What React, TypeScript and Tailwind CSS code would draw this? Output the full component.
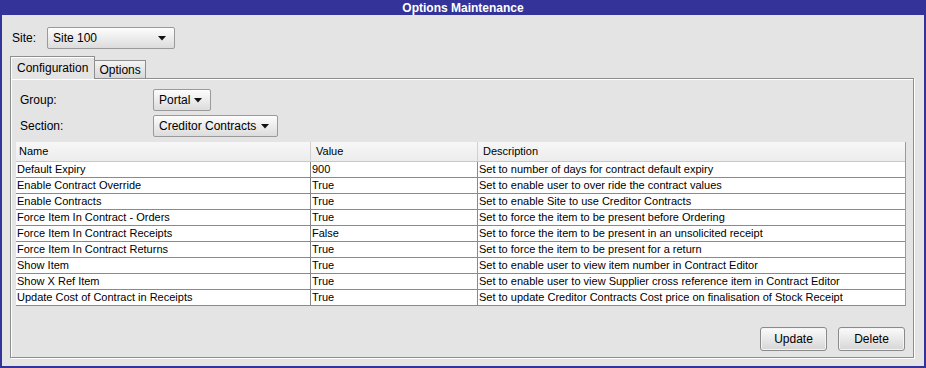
import React from "react";

type Row = { name: string; value: string; description: string };

const rows: Row[] = [
  { name: "Default Expiry", value: "900", description: "Set to number of days for contract default expiry" },
  { name: "Enable Contract Override", value: "True", description: "Set to enable user to over ride the contract values" },
  { name: "Enable Contracts", value: "True", description: "Set to enable Site to use Creditor Contracts" },
  { name: "Force Item In Contract - Orders", value: "True", description: "Set to force the item to be present before Ordering" },
  { name: "Force Item In Contract Receipts", value: "False", description: "Set to force the item to be present in an unsolicited receipt" },
  { name: "Force Item In Contract Returns", value: "True", description: "Set to force the item to be present for a return" },
  { name: "Show Item", value: "True", description: "Set to enable user to view item number in Contract Editor" },
  { name: "Show X Ref Item", value: "True", description: "Set to enable user to view Supplier cross reference item in Contract Editor" },
  { name: "Update Cost of Contract in Receipts", value: "True", description: "Set to update Creditor Contracts Cost price on finalisation of Stock Receipt" },
];

const Combo = ({ label, width }: { label: string; width: string }) => (
  <div
    className={`flex items-center justify-between h-[22px] ${width} pl-[5px] pr-[8px] border border-[#9a9a9a] rounded-[2px] bg-gradient-to-b from-[#fdfdfd] to-[#dcdcdc] text-[12px] text-black`}
  >
    <span>{label}</span>
    <svg width="8" height="5" viewBox="0 0 8 5">
      <path d="M0 0 L8 0 L4 4.5 Z" fill="#111" />
    </svg>
  </div>
);

const Button = ({ label }: { label: string }) => (
  <button className="h-[24px] w-[67px] border border-[#8a8a8a] rounded-[3px] bg-gradient-to-b from-[#fbfbfb] to-[#d6d6d6] text-[12px] text-black shadow-[inset_0_0_0_1px_#f4f4f4]">
    {label}
  </button>
);

export default function App() {
  return (
    <div
      className="w-[926px] h-[368px] bg-[#333399] flex flex-col text-black"
      style={{ fontFamily: '"Liberation Sans", Arial, sans-serif' }}
    >
      <div className="h-[15px] flex items-center justify-center text-white font-bold text-[12px] leading-none">
        Options Maintenance
      </div>
      <div className="flex-1 mx-[2px] mb-[2px] bg-[#e4e4e4] flex flex-col">
        {/* Site */}
        <div className="flex items-center mt-[12px] ml-[10px] h-[22px]">
          <span className="text-[12px] w-[35px]">Site:</span>
          <Combo label="Site 100" width="w-[128px]" />
        </div>

        {/* Tabs */}
        <div className="flex items-end ml-[8px] mt-[6px] h-[23px]">
          <div className="h-[23px] px-[6px] flex items-center border border-b-0 border-[#8e8e8e] bg-[#e4e4e4] text-[12px] relative z-10 -mb-px pb-px shadow-[inset_1px_1px_0_#fff]">
            Configuration
          </div>
          <div className="h-[18px] px-[4px] flex items-center border border-b-0 border-l-0 border-[#8e8e8e] bg-gradient-to-b from-[#f4f4f4] to-[#d8d8d8] text-[12px]">
            Options
          </div>
        </div>

        {/* Panel */}
        <div className="ml-[8px] mr-[10px] h-[280px] border border-[#8e8e8e] shadow-[inset_1px_1px_0_#fff,1px_1px_0_#fff] flex flex-col">
          <div className="flex items-center mt-[10px] ml-[9px] h-[22px]">
            <span className="text-[12px] w-[133px]">Group:</span>
            <Combo label="Portal" width="w-[58px]" />
          </div>
          <div className="flex items-center mt-[4px] ml-[9px] h-[22px]">
            <span className="text-[12px] w-[133px]">Section:</span>
            <Combo label="Creditor Contracts" width="w-[125px]" />
          </div>

          {/* Table */}
          <div className="ml-[5px] mt-[5px] w-[890px] border-r border-[#9a9a9a]">
            <div className="grid grid-cols-[295px_167px_1fr] h-[20px] bg-gradient-to-b from-[#f7f7f7] to-[#ececec] border-b border-[#c8c8c8] text-[11px]">
              <div className="flex items-center pl-[3px] border-r border-[#d0d0d0]">Name</div>
              <div className="flex items-center pl-[5px] border-r border-[#d0d0d0]">Value</div>
              <div className="flex items-center pl-[5px]">Description</div>
            </div>
            {rows.map((r) => (
              <div
                key={r.name}
                className="grid grid-cols-[295px_167px_1fr] h-[16px] bg-white border-b border-[#8a8a8a] text-[11px] leading-[15px]"
              >
                <div className="pl-[1px] border-r border-[#8a8a8a] whitespace-nowrap overflow-hidden">{r.name}</div>
                <div className="pl-[1px] border-r border-[#8a8a8a]">{r.value}</div>
                <div className="pl-[1px] whitespace-nowrap overflow-hidden">{r.description}</div>
              </div>
            ))}
          </div>

          <div className="flex-1" />
          <div className="flex justify-end gap-[11px] mr-[8px] mb-[6px]">
            <Button label="Update" />
            <Button label="Delete" />
          </div>
        </div>
      </div>
    </div>
  );
}
